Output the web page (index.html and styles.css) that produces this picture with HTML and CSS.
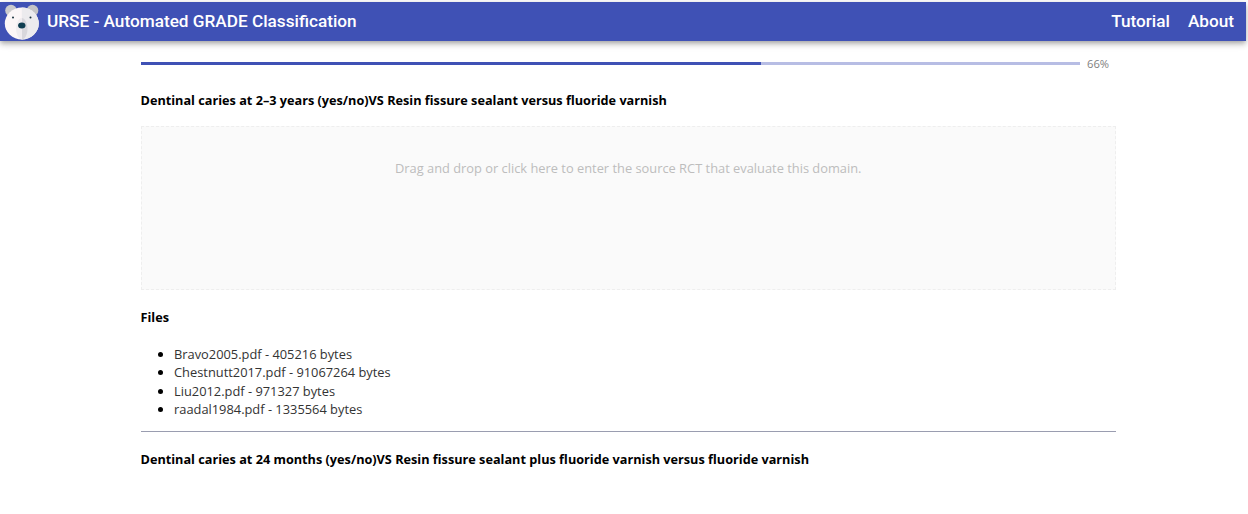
FILE: index.html
```html
<!DOCTYPE html>
<html lang="en">
<head>
<meta charset="utf-8">
<title>URSE - Automated GRADE Classification</title>
<link rel="stylesheet" href="styles.css">
</head>
<body>
<header class="appbar">
  <div class="brand">
    <svg class="logo" viewBox="0 0 36 36" aria-hidden="true">
      <circle cx="7" cy="6.500" r="5.800" fill="#cbcbcd"/>
      <circle cx="28.500" cy="6.500" r="5.800" fill="#c4c4c6"/>
      <ellipse cx="17.800" cy="19.500" rx="17" ry="16" fill="#fbf6f7"/>
      <path d="M17.800 3.500a17 16 0 0 1 0 32z" fill="#ecebee"/>
      <path d="M17.800 14c3.500 0 5.700 6 5.700 11s-2.500 10.500-5.700 10.500z" fill="#d8d7dc"/>
      <path d="M17.800 14c-3.500 0-5.700 6-5.700 11s2.500 10.500 5.700 10.500z" fill="#efecef"/>
      <circle cx="9" cy="13.500" r="1" fill="#17303c"/>
      <circle cx="26.500" cy="13.500" r="1" fill="#17303c"/>
      <ellipse cx="17.800" cy="21.500" rx="3.700" ry="3" fill="#0e3d50"/>
    </svg>
    <span class="title">URSE - Automated GRADE Classification</span>
  </div>
  <nav class="nav">
    <a class="nav-link">Tutorial</a>
    <a class="nav-link">About</a>
  </nav>
</header>
<main class="content">
  <div class="progress-row">
    <div class="track"><div class="fill" style="width:66%"></div></div>
    <span class="percent">66%</span>
  </div>
  <h2 class="domain first">Dentinal caries at 2–3 years (yes/no)VS Resin fissure sealant versus fluoride varnish</h2>
  <div class="dropzone">Drag and drop or click here to enter the source RCT that evaluate this domain.</div>
  <h3 class="files-title">Files</h3>
  <ul class="files">
    <li>Bravo2005.pdf - 405216 bytes</li>
    <li>Chestnutt2017.pdf - 91067264 bytes</li>
    <li>Liu2012.pdf - 971327 bytes</li>
    <li>raadal1984.pdf - 1335564 bytes</li>
  </ul>
  <hr class="rule">
  <h2 class="domain">Dentinal caries at 24 months (yes/no)VS Resin fissure sealant plus fluoride varnish versus fluoride varnish</h2>
</main>
</body>
</html>
```
FILE: styles.css
```css
* { box-sizing: border-box; }
html, body { margin: 0; height: 100%; overflow: hidden; }
body { background: #fff; font-family: "Open Sans", "Noto Sans", sans-serif; color: #000; padding-top: 2px; }
.appbar {
  height: 39px; margin-right: 2px; background: #3f51b5; color: #fff;
  display: flex; align-items: center; justify-content: space-between;
  padding: 0 12px 0 4px;
  box-shadow: 0 2px 4px -1px rgba(0,0,0,.2), 0 4px 5px 0 rgba(0,0,0,.14), 0 1px 10px 0 rgba(0,0,0,.12);
}
.brand { display: flex; align-items: center; gap: 7px; }
.logo { width: 36px; height: 36px; display: block; }
.title, .nav-link { font-family: Roboto, sans-serif; font-weight: 500; font-size: 17.200px; padding-bottom: 2px; }
.nav { display: flex; gap: 18px; }
.content { width: 975.500px; margin-left: 140.500px; }
.progress-row { display: flex; align-items: center; margin-top: 14px; height: 16px; }
.track { width: 939.500px; height: 3px; background: #b7bde4; }
.fill { height: 100%; background: #3f51b5; }
.percent { margin-left: 7px; font-size: 11.200px; color: #808080; }
.domain { margin: 0; font-size: 12.700px; font-weight: 700; line-height: 18px; }
.domain.first { margin-top: 20px; }
.dropzone {
  height: 164px; margin-top: 17px; padding-top: 32px; text-align: center;
  background: #fafafa; border: 1px dashed #eeeeee; color: #bdbdbd; font-size: 12.850px; line-height: 18px;
}
.files-title { margin: 18px 0 0; font-size: 12.700px; font-weight: 700; line-height: 18px; }
.files { margin: 19px 0 0; padding: 0 0 0 33.500px; font-size: 12.850px; line-height: 18.300px; color: #333; }
.files li::marker { color: #000; }
.rule { margin: 13px 0 0; border: 0; border-top: 1px solid #9a9db0; }
.rule + .domain { margin-top: 18px; }
```
